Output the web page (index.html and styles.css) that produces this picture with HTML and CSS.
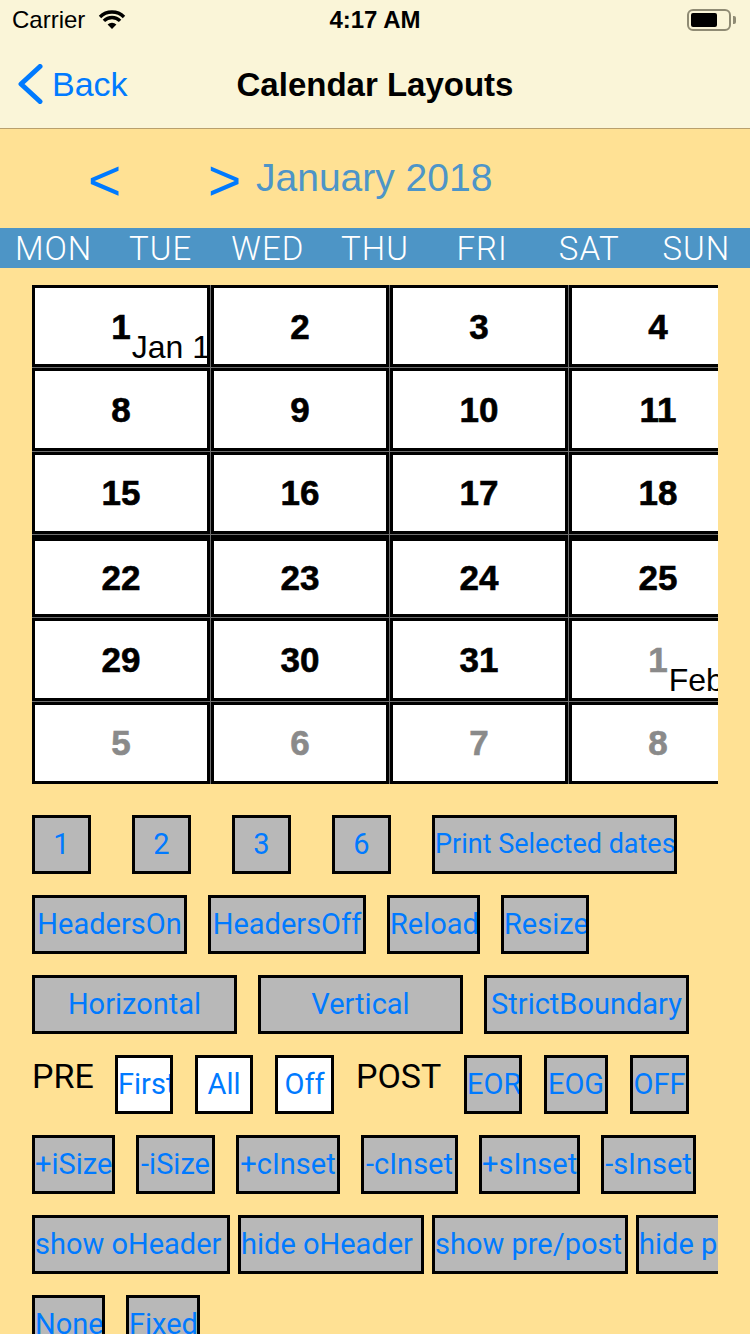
FILE: index.html
```html
<!DOCTYPE html>
<html lang="en">
<head>
<meta charset="utf-8">
<title>Calendar Layouts</title>
<link rel="stylesheet" href="styles.css">
</head>
<body>
<div class="screen">
  <header class="topbar">
    <div class="status">
      <div class="status-left">
        <span class="carrier">Carrier</span>
        <svg class="wifi" width="28" height="20" viewBox="0 0 28 20">
          <path d="M2 7 A17 17 0 0 1 26 7" fill="none" stroke="#000" stroke-width="3.4"/>
          <path d="M5.9 10.9 A11.5 11.5 0 0 1 22.1 10.9" fill="none" stroke="#000" stroke-width="3.4"/>
          <path d="M14 19 L9.6 14.6 A6.2 6.2 0 0 1 18.4 14.6 Z" fill="#000"/>
        </svg>
      </div>
      <span class="time">4:17 AM</span>
      <div class="status-right">
        <div class="battery"><div class="battery-level"></div></div>
        <div class="battery-nub"></div>
      </div>
    </div>
    <nav class="navbar">
      <div class="nav-left">
        <svg class="chevron" width="28" height="40" viewBox="0 0 28 40">
          <polyline points="24,2.5 5,20 24,37.5" fill="none" stroke="#007AFF" stroke-width="5" stroke-linecap="round" stroke-linejoin="round"/>
        </svg>
        <span class="back">Back</span>
      </div>
      <span class="nav-title">Calendar Layouts</span>
      <div class="nav-right"></div>
    </nav>
  </header>

  <section class="month-head">
    <span class="month-arrow">&lt;</span>
    <span class="month-arrow month-arrow-next">&gt;</span>
    <span class="month-title">January 2018</span>
  </section>

  <div class="weekdays">
    <span>MON</span><span>TUE</span><span>WED</span><span>THU</span><span>FRI</span><span>SAT</span><span>SUN</span>
  </div>

  <div class="calendar">
    <div class="cal-grid">
      <div class="cell"><span class="num">1<span class="sub">Jan 1</span></span></div>
      <div class="cell"><span class="num">2</span></div>
      <div class="cell"><span class="num">3</span></div>
      <div class="cell"><span class="num">4</span></div>
      <div class="cell"><span class="num">5</span></div>
      <div class="cell"><span class="num">6</span></div>
      <div class="cell"><span class="num">7</span></div>

      <div class="cell"><span class="num">8</span></div>
      <div class="cell"><span class="num">9</span></div>
      <div class="cell"><span class="num">10</span></div>
      <div class="cell"><span class="num">11</span></div>
      <div class="cell"><span class="num">12</span></div>
      <div class="cell"><span class="num">13</span></div>
      <div class="cell"><span class="num">14</span></div>

      <div class="cell"><span class="num">15</span></div>
      <div class="cell"><span class="num">16</span></div>
      <div class="cell"><span class="num">17</span></div>
      <div class="cell"><span class="num">18</span></div>
      <div class="cell"><span class="num">19</span></div>
      <div class="cell"><span class="num">20</span></div>
      <div class="cell"><span class="num">21</span></div>

      <div class="cell cell-heavy"><span class="num">22</span></div>
      <div class="cell cell-heavy"><span class="num">23</span></div>
      <div class="cell cell-heavy"><span class="num">24</span></div>
      <div class="cell cell-heavy"><span class="num">25</span></div>
      <div class="cell cell-heavy"><span class="num">26</span></div>
      <div class="cell cell-heavy"><span class="num">27</span></div>
      <div class="cell cell-heavy"><span class="num">28</span></div>

      <div class="cell"><span class="num">29</span></div>
      <div class="cell"><span class="num">30</span></div>
      <div class="cell"><span class="num">31</span></div>
      <div class="cell"><span class="num out">1<span class="sub">Feb</span></span></div>
      <div class="cell"><span class="num out">2</span></div>
      <div class="cell"><span class="num out">3</span></div>
      <div class="cell"><span class="num out">4</span></div>

      <div class="cell"><span class="num out">5</span></div>
      <div class="cell"><span class="num out">6</span></div>
      <div class="cell"><span class="num out">7</span></div>
      <div class="cell"><span class="num out">8</span></div>
      <div class="cell"><span class="num out">9</span></div>
      <div class="cell"><span class="num out">10</span></div>
      <div class="cell"><span class="num out">11</span></div>
    </div>
  </div>

  <div class="controls">
    <div class="row row-wide">
      <span class="btn w59">1</span>
      <span class="btn w59">2</span>
      <span class="btn w59">3</span>
      <span class="btn w59">6</span>
      <span class="btn btn-small w245">Print Selected dates</span>
    </div>
    <div class="row">
      <span class="btn w155">HeadersOn</span>
      <span class="btn w158">HeadersOff</span>
      <span class="btn w93">Reload</span>
      <span class="btn w88">Resize</span>
    </div>
    <div class="row">
      <span class="btn w205">Horizontal</span>
      <span class="btn w205">Vertical</span>
      <span class="btn w205">StrictBoundary</span>
    </div>
    <div class="row row-22">
      <span class="label w61">PRE</span>
      <span class="btn btn-white w58">First</span>
      <span class="btn btn-white w58">All</span>
      <span class="btn btn-white w59">Off</span>
      <span class="label w86">POST</span>
      <span class="btn w58">EOR</span>
      <span class="btn w64">EOG</span>
      <span class="btn w59">OFF</span>
    </div>
    <div class="row">
      <span class="btn w83">+iSize</span>
      <span class="btn w79">-iSize</span>
      <span class="btn w104">+cInset</span>
      <span class="btn w97">-cInset</span>
      <span class="btn w101">+sInset</span>
      <span class="btn w95">-sInset</span>
    </div>
    <div class="row row-tight">
      <span class="btn btn-left w198">show oHeader</span>
      <span class="btn btn-left w186">hide oHeader</span>
      <span class="btn btn-left w196">show pre/post</span>
      <span class="btn btn-left w196">hide pre/post</span>
    </div>
    <div class="row">
      <span class="btn w73">None</span>
      <span class="btn w74">Fixed</span>
    </div>
  </div>
</div>
</body>
</html>
```

FILE: styles.css
```css
* { box-sizing: border-box; }

html, body {
  margin: 0;
  padding: 0;
}

body {
  width: 750px;
  height: 1334px;
  overflow: hidden;
  background: #FFE194;
  font-family: "Liberation Sans", Arial, sans-serif;
  color: #000;
}

.screen {
  width: 750px;
  height: 1334px;
  overflow: hidden;
}

/* ---------- top bar ---------- */
.topbar {
  background: #FAF5D8;
  border-bottom: 1px solid #B9A06C;
  height: 129px;
}

.status {
  height: 40px;
  display: grid;
  grid-template-columns: 1fr auto 1fr;
  align-items: center;
}

.status-left {
  display: flex;
  align-items: center;
  padding-left: 12px;
  gap: 13px;
}

.carrier {
  font-size: 24px;
  line-height: 1;
}

.wifi { display: block; }

.time {
  font-size: 24px;
  font-weight: bold;
  line-height: 1;
}

.status-right {
  display: flex;
  justify-content: flex-end;
  align-items: center;
  padding-right: 14px;
}

.battery {
  width: 44px;
  height: 22px;
  border: 2px solid #8F8B74;
  border-radius: 6px;
  padding: 2px;
}

.battery-level {
  width: 26px;
  height: 100%;
  background: #000;
  border-radius: 2px;
}

.battery-nub {
  width: 3px;
  height: 8px;
  margin-left: 2px;
  background: #8F8B74;
  border-radius: 0 2px 2px 0;
}

.navbar {
  height: 88px;
  display: grid;
  grid-template-columns: 1fr auto 1fr;
  align-items: center;
}

.nav-left {
  display: flex;
  align-items: center;
  padding-left: 16px;
}

.chevron { display: block; }

.back {
  color: #007AFF;
  font-size: 34px;
  line-height: 1;
  margin-left: 8px;
}

.nav-title {
  font-size: 33px;
  font-weight: bold;
  line-height: 1;
}

/* ---------- month header ---------- */
.month-head {
  height: 99px;
  padding-top: 4px;
  padding-left: 88px;
  display: flex;
  align-items: center;
}

.month-arrow {
  color: #007AFF;
  font-size: 57px;
  line-height: 1;
  width: 34px;
}

.month-arrow-next {
  margin-left: 86px;
}

.month-title {
  color: #4D95C8;
  font-size: 39px;
  line-height: 1;
  margin-left: 14px;
  margin-bottom: 6px;
}

/* ---------- weekdays ---------- */
.weekdays {
  height: 40px;
  background: #4D95C6;
  display: grid;
  grid-template-columns: repeat(7, 1fr);
  align-items: center;
  justify-items: center;
}

.weekdays span {
  color: #fff;
  font-family: Roboto, "Liberation Sans", sans-serif;
  font-weight: 300;
  font-size: 33px;
  letter-spacing: 1px;
  line-height: 1;
}

/* ---------- calendar ---------- */
.calendar {
  margin: 17px 0 0 32px;
  width: 686px;
  height: 499px;
  overflow: hidden;
}

.cal-grid {
  display: grid;
  grid-template-columns: repeat(7, 178px);
  grid-template-rows: repeat(6, 82.33px);
  gap: 1px;
  width: 1252px;
  background: #6E6E6E;
}

.cell {
  background: #fff;
  border: 3px solid #000;
  display: flex;
  align-items: center;
  justify-content: center;
  overflow: hidden;
}

.cell-heavy { border-top-width: 6px; }

.num {
  position: relative;
  font-size: 35px;
  font-weight: bold;
  line-height: 1;
  color: #000;
  -webkit-text-stroke: 0.6px currentColor;
}

.num.out { color: #8A8A8A; }

.sub {
  position: absolute;
  left: 100%;
  top: 22px;
  margin-left: 1px;
  font-size: 32px;
  font-weight: normal;
  line-height: 1;
  color: #000;
  white-space: nowrap;
  -webkit-text-stroke: 0;
}

/* ---------- controls ---------- */
.controls {
  margin: 31px 0 0 32px;
  width: 686px;
  overflow: hidden;
  font-family: Roboto, "Liberation Sans", sans-serif;
}

.row {
  display: flex;
  gap: 21px;
  height: 59px;
  margin-bottom: 21px;
}

.row-wide { gap: 41px; }
.row-22 { gap: 22px; }
.row-tight { gap: 8px; }

.btn {
  flex-shrink: 0;
  height: 59px;
  border: 3px solid #000;
  background: #B8B8B8;
  color: #007AFF;
  font-size: 29px;
  line-height: 53px;
  text-align: center;
  white-space: nowrap;
  overflow: hidden;
}

.btn-white { background: #fff; }
.btn-small { font-size: 27px; }
.btn-left { text-align: left; }

.label {
  flex-shrink: 0;
  font-size: 34px;
  line-height: 1;
  padding-top: 4px;
  white-space: nowrap;
}

.w58 { width: 58px; }
.w59 { width: 59px; }
.w61 { width: 61px; }
.w64 { width: 64px; }
.w73 { width: 73px; }
.w74 { width: 74px; }
.w79 { width: 79px; }
.w83 { width: 83px; }
.w86 { width: 86px; }
.w88 { width: 88px; }
.w93 { width: 93px; }
.w95 { width: 95px; }
.w97 { width: 97px; }
.w101 { width: 101px; }
.w104 { width: 104px; }
.w155 { width: 155px; }
.w158 { width: 158px; }
.w186 { width: 186px; }
.w196 { width: 196px; }
.w198 { width: 198px; }
.w205 { width: 205px; }
.w245 { width: 245px; }
```
